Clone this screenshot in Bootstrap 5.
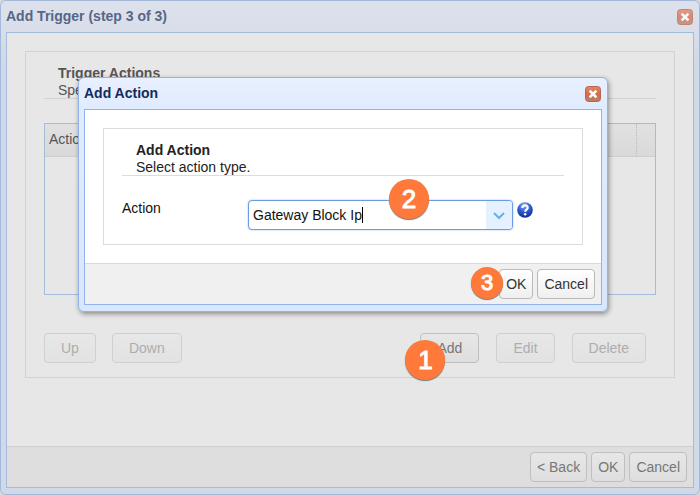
<!DOCTYPE html>
<html lang="en">
<head>
<meta charset="utf-8">
<meta name="viewport" content="width=device-width, initial-scale=1">
<title>Add Trigger</title>
<link href="https://cdn.jsdelivr.net/npm/bootstrap@5.3.0/dist/css/bootstrap.min.css" rel="stylesheet">
<style>
body { font: 14px/17px "Liberation Sans", Arial, sans-serif; background: #d8d8d8; color: #222; }
.win { border: 1px solid #a4b9da; border-radius: 6px; background: linear-gradient(#dde1ea, #d9deea 30px, #d0d9e7 60px); padding: 0 5px 6px; }
.win-title { height: 31px; font-size: 14px; line-height: 17px; font-weight: bold; color: #566689; margin: 0; }
.win-body { border: 1px solid #a4bbdd; background: #e7e7e7; }
.frame { border: 1px solid #d2d2d2; }
.main-frame { margin: 18px 18px 0; padding: 13px 18px 14px; }
.heading-block { border-bottom: 1px solid #d2d2d2; padding-left: 14px; color: #555; }
.heading-block h2 { font-size: 14px; line-height: 17px; font-weight: bold; margin: 0; }
.heading-block p { line-height: 16px; margin: 0; }
.grid-box { border: 1px solid #a5bcd9; height: 172px; margin-top: 24px; }
.grid-box table { width: 100%; color: #555; }
.grid-box th { font-weight: normal; height: 32px; padding: 0 4px; background: linear-gradient(#e1e1e1, #d9d9d9); border-bottom: 1px solid #cecece; }
.grid-box th:last-child { width: 19px; border-left: 1px dotted #bbb; }
.ui-btn { --bs-btn-font-size: 14px; --bs-btn-line-height: 18px; --bs-btn-padding-y: 5px; --bs-btn-padding-x: 6px; --bs-btn-border-radius: 4px;
  --bs-btn-color: #333; --bs-btn-border-color: #bababa; --bs-btn-disabled-color: #adadad; --bs-btn-disabled-border-color: #d0d0d0; --bs-btn-disabled-opacity: 1;
  background: linear-gradient(#fff, #efefef); }
.ui-btn.dim { --bs-btn-color: #777; --bs-btn-border-color: #bfbfbf; background: linear-gradient(#e7e7e7, #dedede); }
.ui-btn.dim:disabled { background: linear-gradient(#e7e7e7, #e2e2e2); }
.ui-btn.wide { --bs-btn-padding-x: 16px; }
.bar { border-top: 1px solid #cfcfcf; background: #dedede; padding: 5px 6px 5px 5px; }
.row-actions { margin-top: 38px; padding-right: 10px; }
.btn-set { gap: 17px; }
.close-btn { width: 16px; height: 16px; margin-right: 1px; }
.close-btn svg, .help-btn svg { display: block; }
.dialog-pop { top: 77px; left: 78px; right: 92px; border: 1px solid #8fb3ea; background: linear-gradient(#e9f0fe, #dfebfe 32px, #d9e7fd); box-shadow: 1px 2px 5px #0006; padding: 0 5px 6px; }
.dialog-pop .win-title { color: #152a5c; }
.dialog-pop .win-body { border-color: #8fb3ea; background: #fff; }
.dialog-pop .frame { border-color: #dcdcdc; margin: 18px 18px 18px; padding: 13px 18px 14px; }
.dialog-pop .heading-block { border-color: #dcdcdc; color: #222; }
.dialog-pop .bar { background: #f0f0f0; border-color: #dadada; }
.field-row { margin-top: 24px; }
.field-name { width: 126px; color: #111; }
.combo { width: 265px; height: 30px; border: 1px solid #6b9be0; border-radius: 4px; background: #fff; box-shadow: 0 0 2px #9abdf0; }
.combo input { min-width: 0; padding: 0 4px; color: #111; background: transparent; outline: 0; }
.combo button { width: 26px; background: #e6f1ff; border-radius: 0 3px 3px 0; }
.caret-line { left: 113px; top: 6px; width: 1px; height: 16px; background: #000; }
.help-btn { margin: 2px 0 0 4px; width: 16px; height: 16px; }
.step { width: 40px; height: 40px; border-radius: 50%; background: #ff793b; color: #fff; font-size: 26px; line-height: 40px; text-align: center; box-shadow: 0 1px 1px #777; -webkit-text-stroke: 1px #fff; }
.step-1 { left: -15px; top: 7px; }
.step-2 { left: 140px; top: -22px; }
.step-3 { width: 32px; height: 32px; font-size: 22px; line-height: 32px; left: -28px; top: -2px; }
</style>
<script src="https://cdn.jsdelivr.net/npm/bootstrap@5.3.0/dist/js/bootstrap.bundle.min.js"></script>
</head>
<body class="min-vh-100 d-flex flex-column position-relative">
<svg width="0" height="0" class="position-absolute" aria-hidden="true">
  <defs>
    <linearGradient id="red" x2="0" y2="1"><stop stop-color="#e9865f"/><stop offset=".5" stop-color="#d66b50"/><stop offset="1" stop-color="#bd8060"/></linearGradient>
    <radialGradient id="blue" cx=".45" cy=".2" r=".85"><stop stop-color="#8fb0f2"/><stop offset=".5" stop-color="#2b5bcd"/><stop offset="1" stop-color="#0a2592"/></radialGradient>
    <symbol id="cross" viewBox="0 0 16 16"><rect x=".5" y=".5" width="15" height="15" rx="3" fill="url(#red)" stroke="#b5664f"/><path d="M5.500 5.500l5 5M10.500 5.500l-5 5" stroke="#fff" stroke-width="2.500" stroke-linecap="square"/></symbol>
  </defs>
</svg>

<main class="win flex-grow-1 d-flex flex-column">
  <header class="d-flex align-items-center justify-content-between">
    <h1 class="win-title d-flex align-items-center">Add Trigger (step 3 of 3)</h1>
    <button type="button" class="close-btn border-0 bg-transparent p-0 opacity-75" aria-label="Close window"><svg width="16" height="16"><use href="#cross"/></svg></button>
  </header>
  <div class="win-body flex-grow-1 d-flex flex-column">
    <section class="frame main-frame">
      <div class="heading-block"><h2>Trigger Actions</h2><p>Spe</p></div>
      <div class="grid-box"><table><thead><tr><th scope="col">Action</th><th scope="col"></th></tr></thead></table></div>
      <div class="row-actions d-flex justify-content-between">
        <div class="d-flex gap-3">
          <button type="button" class="btn ui-btn dim wide" disabled>Up</button>
          <button type="button" class="btn ui-btn dim wide" disabled>Down</button>
        </div>
        <div class="btn-set d-flex">
          <div class="position-relative">
            <button type="button" class="btn ui-btn dim wide">Add</button>
            <span class="step step-1 position-absolute">1</span>
          </div>
          <button type="button" class="btn ui-btn dim wide" disabled>Edit</button>
          <button type="button" class="btn ui-btn dim wide" disabled>Delete</button>
        </div>
      </div>
    </section>
    <footer class="bar d-flex justify-content-end mt-auto">
      <div class="d-flex gap-1">
        <button type="button" class="btn ui-btn dim">&lt; Back</button>
        <button type="button" class="btn ui-btn dim">OK</button>
        <button type="button" class="btn ui-btn dim">Cancel</button>
      </div>
    </footer>
  </div>
</main>

<div class="win dialog-pop position-absolute" role="dialog" aria-labelledby="dlg-title">
  <header class="d-flex align-items-center justify-content-between">
    <h1 class="win-title d-flex align-items-center" id="dlg-title">Add Action</h1>
    <button type="button" class="close-btn border-0 bg-transparent p-0" aria-label="Close dialog"><svg width="16" height="16"><use href="#cross"/></svg></button>
  </header>
  <form class="win-body">
    <section class="frame">
      <div class="heading-block"><h2>Add Action</h2><p>Select action type.</p></div>
      <div class="field-row d-flex align-items-start">
        <label class="field-name" for="action">Action</label>
        <div class="combo position-relative d-flex">
          <input id="action" type="text" class="border-0 flex-grow-1" value="Gateway Block Ip" autocomplete="off">
          <span class="caret-line position-absolute"></span>
          <button type="button" class="border-0 p-0" aria-label="Show actions"><svg width="12" height="8" viewBox="0 0 12 8"><path d="M1 1l5 5 5-5" fill="none" stroke="#62b0ea" stroke-width="2"/></svg></button>
          <span class="step step-2 position-absolute">2</span>
        </div>
        <button type="button" class="help-btn border-0 bg-transparent p-0" aria-label="Help"><svg width="16" height="16" viewBox="0 0 17 17"><circle cx="8.500" cy="8.500" r="8.300" fill="url(#blue)"/><path d="M5.600 6.300C5.700 2.600 11.600 2.700 11.400 6.200c-.1 1.900-2.700 2-2.700 4.100" fill="none" stroke="#fff" stroke-width="2.200"/><circle cx="8.700" cy="13" r="1.300" fill="#fff"/></svg></button>
      </div>
    </section>
    <footer class="bar d-flex justify-content-end">
      <div class="d-flex gap-1">
        <div class="position-relative">
          <button type="button" class="btn ui-btn">OK</button>
          <span class="step step-3 position-absolute">3</span>
        </div>
        <button type="button" class="btn ui-btn">Cancel</button>
      </div>
    </footer>
  </form>
</div>
</body>
</html>
